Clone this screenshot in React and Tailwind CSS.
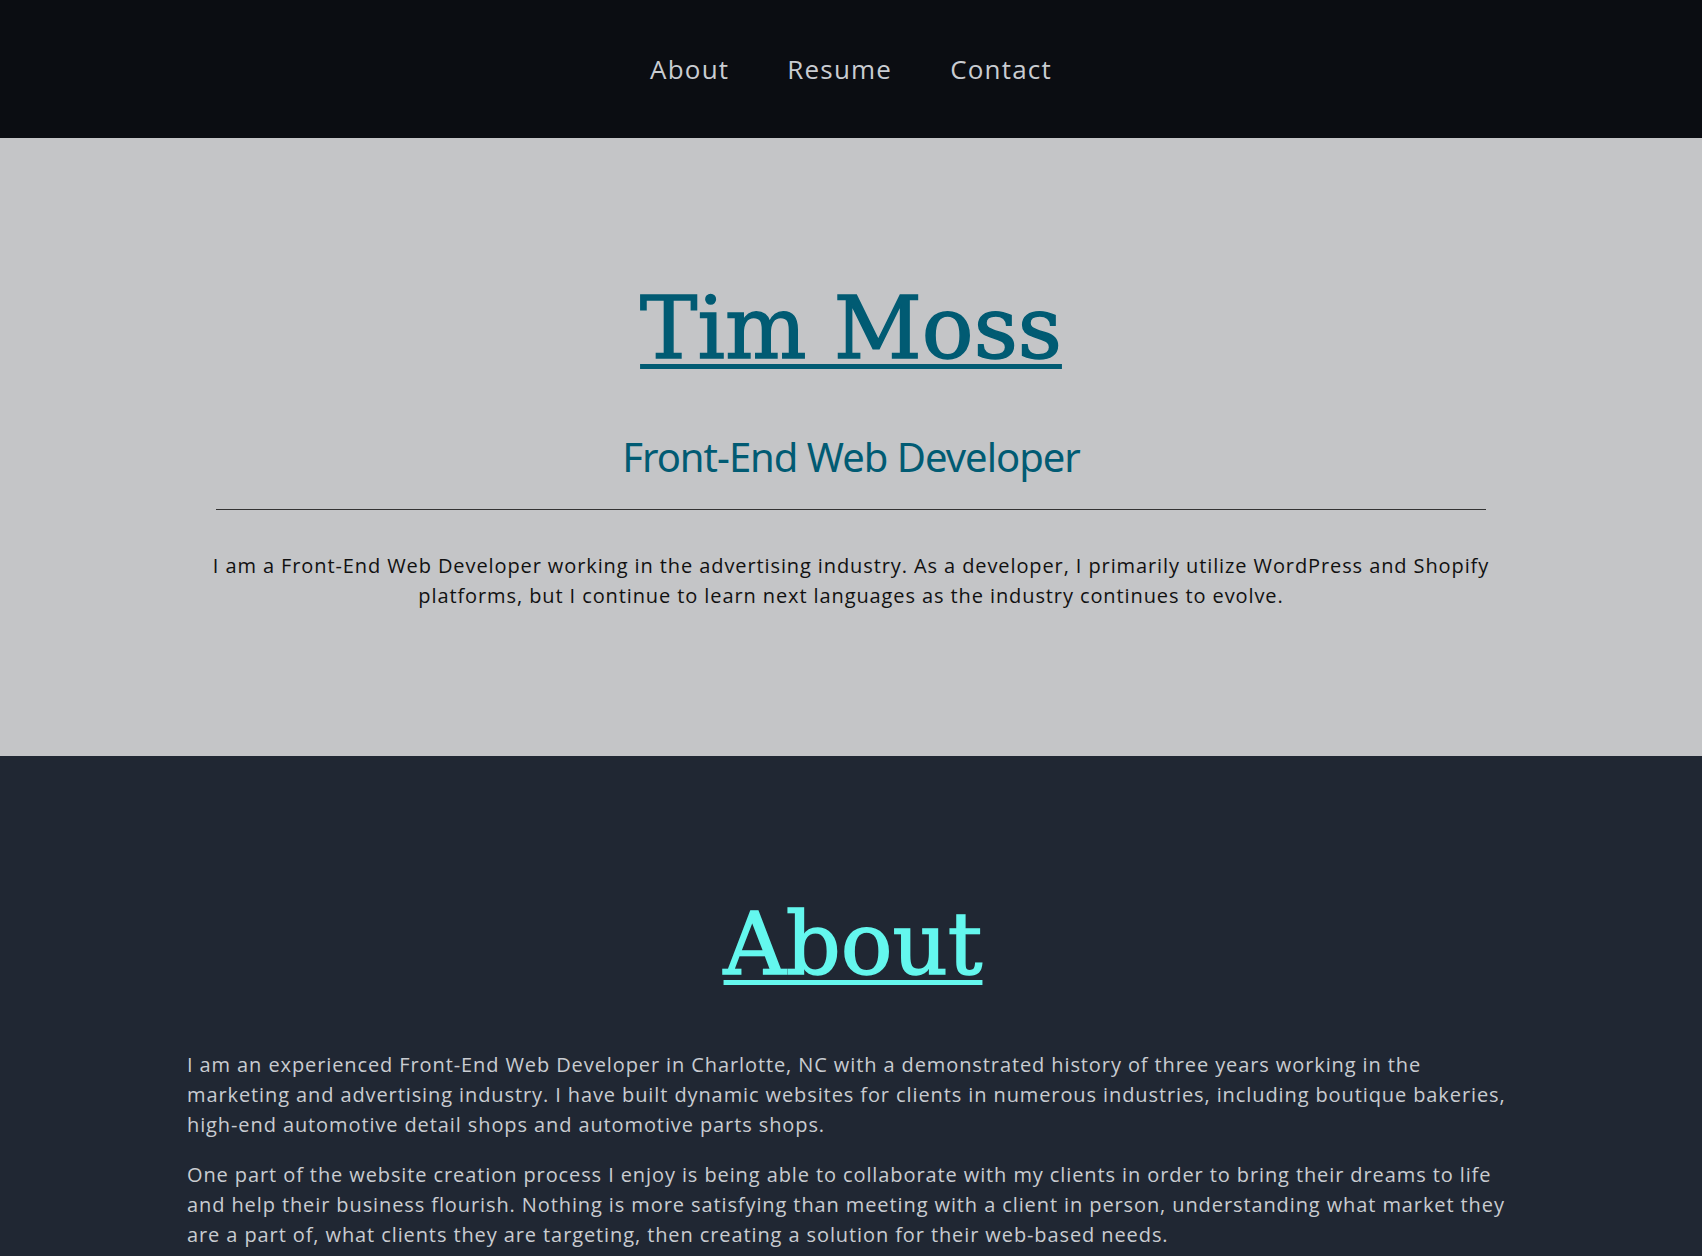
export default function App() {
  const body = { fontFamily: '"Open Sans", "Liberation Sans", sans-serif' };
  return (
    <div className="min-h-screen bg-[#202733]" style={body}>
      <nav className="flex h-[138px] items-center justify-center gap-[58px] bg-[#0b0d12] text-[26px] tracking-[1.2px] text-[#c9ccd1]">
        <a href="#about">About</a>
        <a href="#resume">Resume</a>
        <a href="#contact">Contact</a>
      </nav>

      <header className="bg-[#c4c5c7] px-4 pt-[147px] pb-[145px] text-center">
        <h1
          className="text-[86px] leading-none text-[#015b73] underline decoration-[5px] underline-offset-[6px] [-webkit-text-stroke:1.5px]"
          style={{ fontFamily: '"DejaVu Serif", serif' }}
        >
          Tim Moss
        </h1>
        <h2
          className="mt-[62px] text-[40px] leading-[48px] tracking-[-1px] text-[#015b73]"
          style={{ fontFamily: '"Noto Sans", sans-serif' }}
        >
          Front-End Web Developer
        </h2>
        <hr className="mx-auto mt-[28px] w-[1270px] border-t border-[#333]" />
        <p className="mx-auto mt-[41px] max-w-[1320px] text-[20px] leading-[30px] tracking-[0.9px] text-[#111]">
          I am a Front-End Web Developer working in the advertising industry. As a developer, I primarily utilize
          WordPress and Shopify platforms, but I continue to learn next languages as the industry continues to evolve.
        </p>
      </header>

      <section id="about" className="pt-[145px] pr-[183px] pb-20 pl-[187px]">
        <h2
          className="text-center text-[86px] leading-none text-[#64f7ee] underline decoration-[5px] underline-offset-[6px] [-webkit-text-stroke:1.5px]"
          style={{ fontFamily: '"DejaVu Serif", serif' }}
        >
          About
        </h2>
        <div className="mt-[63px] space-y-[20px] text-[20px] leading-[30px] tracking-[0.9px] text-[#c9ccd1]">
          <p>
            I am an experienced Front-End Web Developer in Charlotte, NC with a demonstrated history of three years
            working in the marketing and advertising industry. I have built dynamic websites for clients in numerous
            industries, including boutique bakeries, high-end automotive detail shops and automotive parts shops.
          </p>
          <p>
            One part of the website creation process I enjoy is being able to collaborate with my clients in order to
            bring their dreams to life and help their business flourish. Nothing is more satisfying than meeting with a
            client in person, understanding what market they are a part of, what clients they are targeting, then
            creating a solution for their web-based needs.
          </p>
        </div>
      </section>
    </div>
  );
}
